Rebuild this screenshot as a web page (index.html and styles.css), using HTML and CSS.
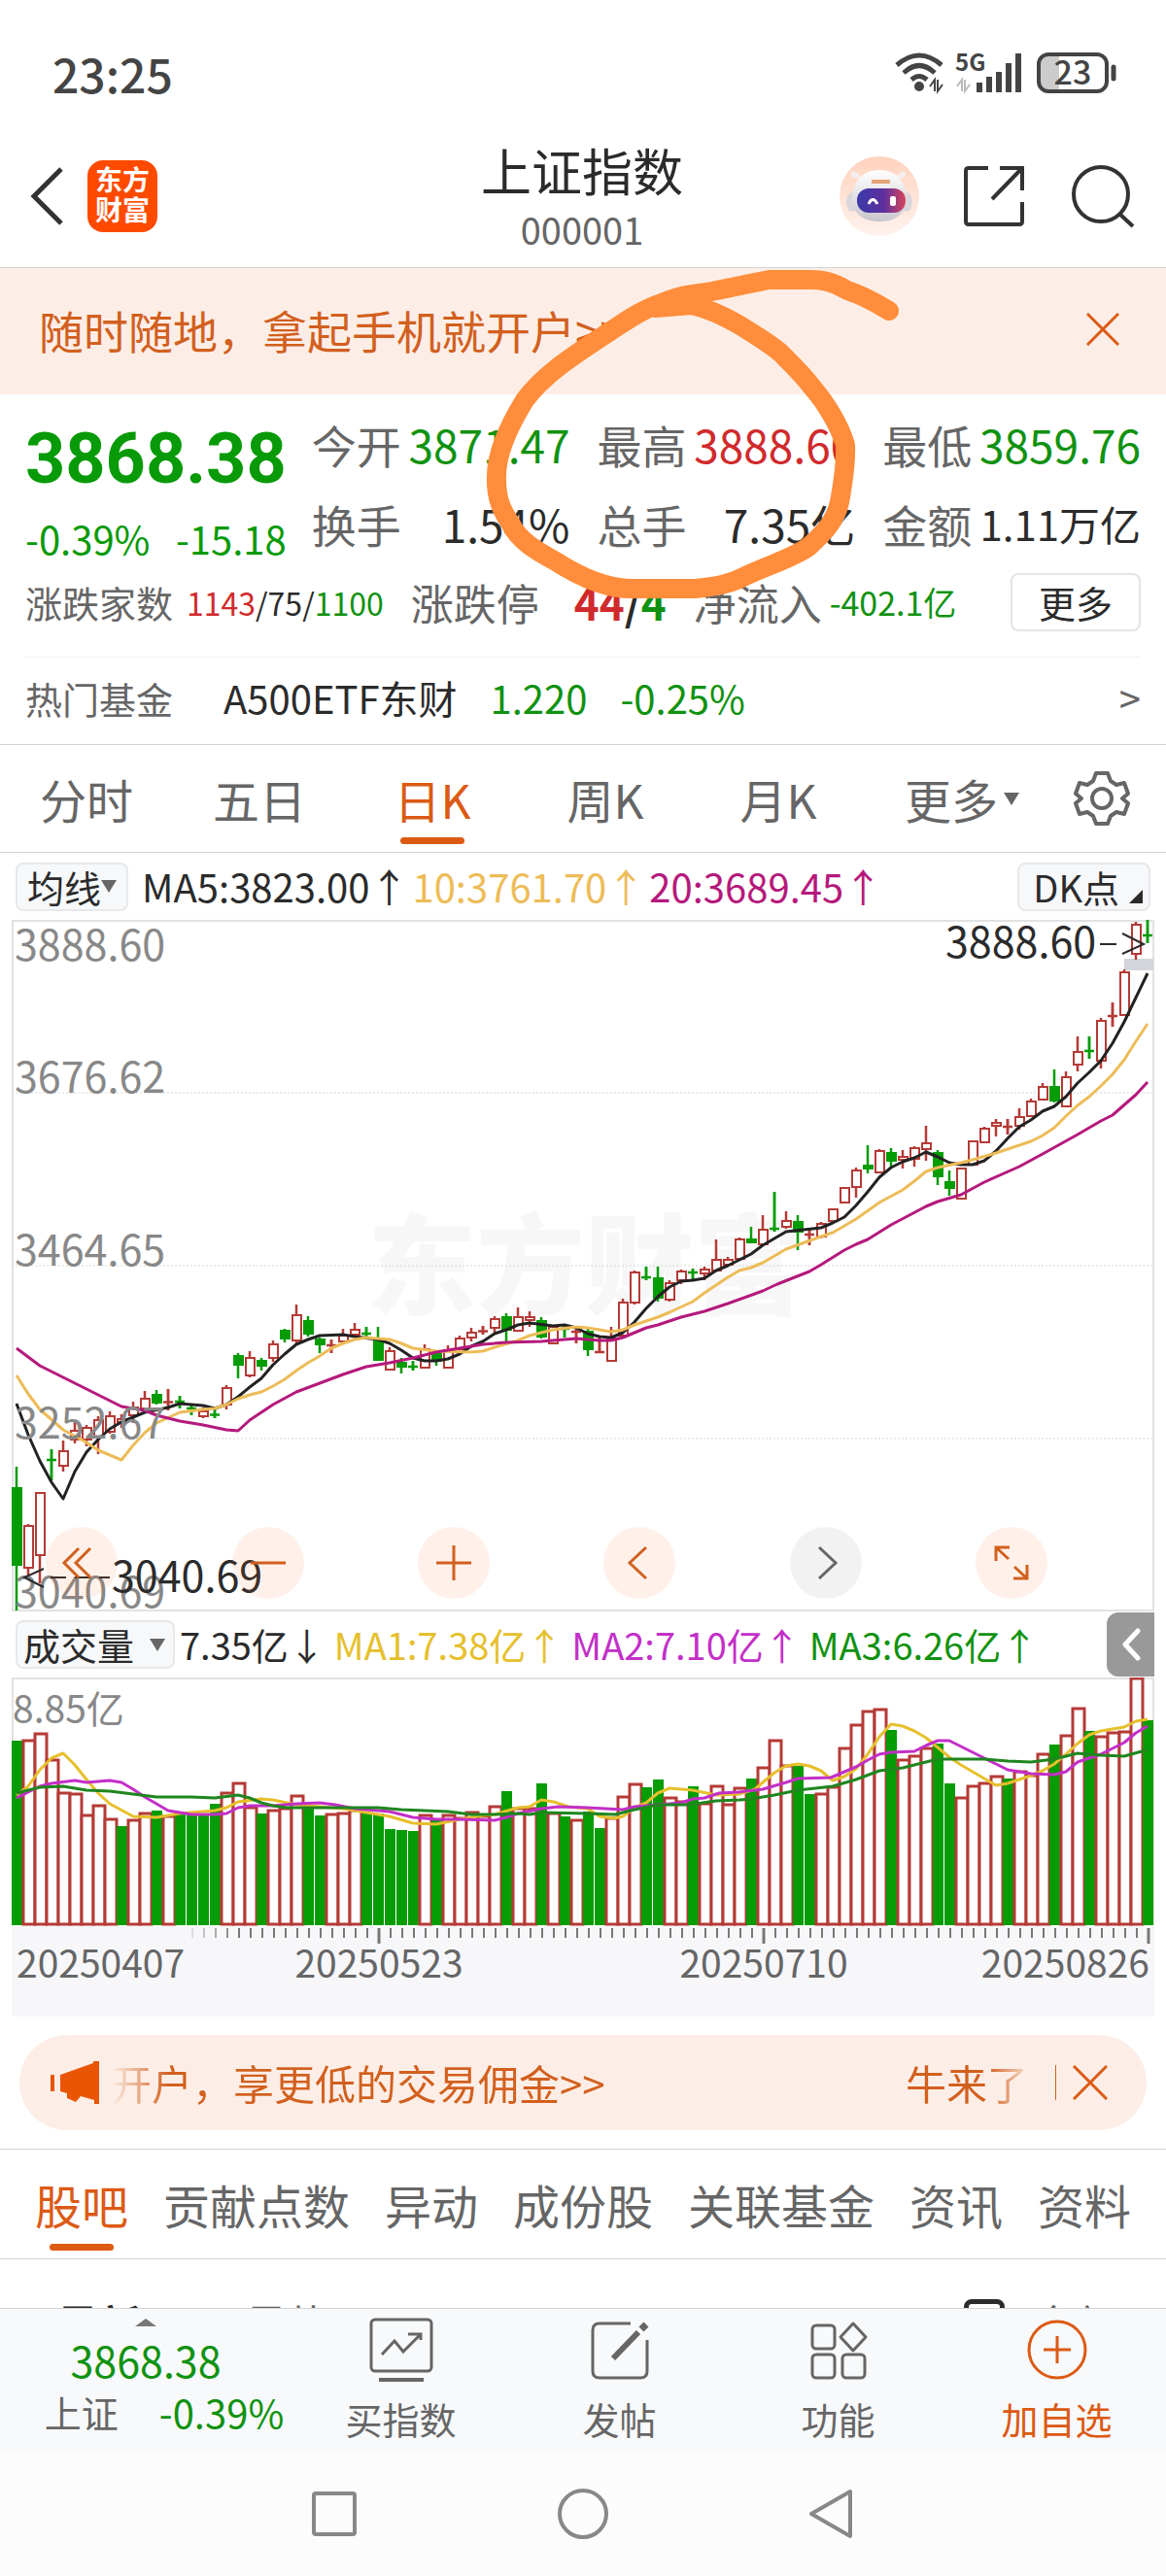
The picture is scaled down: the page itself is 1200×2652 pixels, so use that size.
FILE: index.html
```html
<!DOCTYPE html>
<html lang="zh-CN">
<head>
  <meta charset="UTF-8" />
  <meta name="viewport" content="width=device-width, initial-scale=1" />
  <title>上证指数 000001</title>
  <link rel="stylesheet" href="styles.css">
</head>
<body>
  <div class="app">

    <div class="status-bar">
      <span class="clock">23:25</span>
      <svg class="status-icons" viewBox="0 0 230 44" role="img" aria-label="Wi-Fi, 5G, 23%">
        <g fill="none" stroke="#444" stroke-width="5">
          <path d="M3 14 Q26 -6 49 14" />
          <path d="M10 22 Q26 7 42 22" />
          <path d="M18 29 Q26 22 34 29" />
        </g>
        <circle cx="26" cy="36" r="5" fill="#444" />
        <path d="M37 36 L42 29 V41 M45 29 V41 L50 34" fill="none" stroke="#444" stroke-width="2" />
        <text class="net" x="63" y="20">5G</text>
        <path d="M65 36 L70 29 V41 M73 29 V41 L78 34" fill="none" stroke="#bbb" stroke-width="2" />
        <path d="M88 42 V32 M98 42 V26 M108 42 V21 M118 42 V12 M128 42 V2" stroke="#444" stroke-width="6" />
        <path d="M156 3 h14 v38 h-14 q-7 0 -7 -8 v-22 q0 -8 7 -8z" fill="#ccc" />
        <rect x="149" y="3" width="70" height="38" rx="10" fill="none" stroke="#444" stroke-width="4" />
        <path d="M226 16 V28" stroke="#444" stroke-width="5" stroke-linecap="round" />
        <text class="battery" x="184" y="34" text-anchor="middle">23</text>
      </svg>
    </div>

    <header class="header">
      <div class="header-left">
        <button class="icon-btn" aria-label="返回">
          <svg width="37" height="60" viewBox="0 0 37 60" fill="none" stroke="#333" stroke-width="5"><path d="M33 2 L5 30 L33 58" /></svg>
        </button>
        <a class="logo" href="#"><span>东方</span><span>财富</span></a>
      </div>
      <div class="title">
        <h1>上证指数</h1>
        <p>000001</p>
      </div>
      <div class="header-right">
        <button class="icon-btn" aria-label="智能助手">
          <svg width="82" height="82" viewBox="0 0 82 82">
            <defs>
              <linearGradient id="halo" x1="0" y1="0" x2="0" y2="1"><stop offset="0" stop-color="#ffd2bd" /><stop offset="1" stop-color="#fff3ee" /></linearGradient>
              <linearGradient id="visor" x1="0" y1="0" x2="1" y2="0"><stop offset="0" stop-color="#3a3aa8" /><stop offset=".55" stop-color="#5d2fa0" /><stop offset="1" stop-color="#d8455c" /></linearGradient>
              <linearGradient id="shell" x1="0" y1="0" x2="0" y2="1"><stop offset="0" stop-color="#fff" /><stop offset="1" stop-color="#c9c6cd" /></linearGradient>
            </defs>
            <circle cx="41" cy="41" r="41" fill="url(#halo)" />
            <path d="M14 22 q-4 -3 -1 -7 q8 2 9 8z M66 22 q4 -3 1 -7 q-8 2 -9 8z" fill="#f4eeee" />
            <ellipse cx="13" cy="47" rx="6" ry="10" fill="#d9d6dc" />
            <ellipse cx="69" cy="47" rx="6" ry="10" fill="#d9d6dc" />
            <path d="M41 14 C60 14 69 28 69 44 C69 60 56 67 41 67 C26 67 13 60 13 44 C13 28 22 14 41 14z" fill="url(#shell)" />
            <rect x="33" y="24" width="19" height="4" rx="1" fill="#e5a473" />
            <rect x="18" y="33" width="50" height="25" rx="12" fill="url(#visor)" />
            <path d="M30 49 q4 -9 9 0" fill="none" stroke="#fff" stroke-width="3" />
            <rect x="52" y="41" width="6" height="10" rx="2" fill="#fff" />
          </svg>
        </button>
        <button class="icon-btn" aria-label="分享">
          <svg width="66" height="66" viewBox="0 0 66 66" fill="none" stroke="#333" stroke-width="4"><path d="M26 4 H6 Q3 4 3 7 V59 Q3 62 6 62 H58 Q61 62 61 59 V39 M38 4 H61 V27 M61 4 L30 36" /></svg>
        </button>
        <button class="icon-btn" aria-label="搜索">
          <svg width="66" height="66" viewBox="0 0 66 66" fill="none" stroke="#333" stroke-width="4"><circle cx="31" cy="31" r="28" /><path d="M50 51 L64 64" /></svg>
        </button>
      </div>
    </header>

    <div class="banner">
      <a href="#">随时随地，拿起手机就开户&gt;&gt;</a>
      <button class="icon-btn" aria-label="关闭">
        <svg width="34" height="34" viewBox="0 0 34 34" stroke="#dc5a14" stroke-width="3"><path d="M1 1 L33 33 M33 1 L1 33" /></svg>
      </button>
    </div>

    <section class="quote">
      <div class="quote-main">
        <div class="price">
          <strong>3868.38</strong>
          <p><span>-0.39%</span><span>-15.18</span></p>
        </div>
        <dl class="stats">
          <div><dt>今开</dt><dd class="down">3871.47</dd></div>
          <div><dt>最高</dt><dd class="up">3888.60</dd></div>
          <div><dt>最低</dt><dd class="down">3859.76</dd></div>
          <div><dt>换手</dt><dd>1.54%</dd></div>
          <div><dt>总手</dt><dd>7.35亿</dd></div>
          <div><dt>金额</dt><dd class="long">1.11万亿</dd></div>
        </dl>
      </div>
      <div class="breadth">
        <p class="counts"><span class="label">涨跌家数</span><span><b class="up">1143</b>/75/<b class="down">1100</b></span></p>
        <p class="limits"><span class="label">涨跌停</span><strong><b class="up">44</b>/<b class="down">4</b></strong></p>
        <p class="flow"><span class="label">净流入</span><span class="down">-402.1亿</span></p>
        <button class="more">更多</button>
      </div>
      <a class="fund" href="#">
        <span class="label">热门基金</span>
        <span class="fund-name">A500ETF东财</span>
        <span class="down">1.220</span>
        <span class="down">-0.25%</span>
        <span class="arrow">&gt;</span>
      </a>
    </section>

    <nav class="periods">
      <button>分时</button>
      <button>五日</button>
      <button class="active">日K</button>
      <button>周K</button>
      <button>月K</button>
      <button class="drop">更多<i class="caret"></i></button>
      <button class="gear" aria-label="设置">
        <svg width="58" height="58" viewBox="0 0 58 58" fill="none" stroke="#666" stroke-width="4" stroke-linejoin="round">
          <path d="M23 3 H35 L38 11 L44 15 L52 13 L56 24 L50 29 L56 34 L52 45 L44 43 L38 47 L35 55 H23 L20 47 L14 43 L6 45 L2 34 L8 29 L2 24 L6 13 L14 15 L20 11z" />
          <circle cx="29" cy="29" r="10" />
        </svg>
      </button>
    </nav>

    <div class="indicators averages">
      <button class="chip">均线<i class="caret"></i></button>
      <span>MA5:3823.00↑</span>
      <span class="ma10">10:3761.70↑</span>
      <span class="ma20">20:3689.45↑</span>
      <button class="chip dk">DK点<i class="corner"></i></button>
    </div>

    <div class="kline">
      <svg id="kline" class="chart" viewBox="12 0 1176 712"></svg>
      <div class="tools">
        <button aria-label="最早"><svg viewBox="0 0 74 74"><path d="M34 22 L19 37 L34 52 M46 22 L31 37 L46 52" /></svg></button>
        <button aria-label="缩小"><svg viewBox="0 0 74 74"><path d="M19 37 H55" /></svg></button>
        <button aria-label="放大"><svg viewBox="0 0 74 74"><path d="M19 37 H55 M37 19 V55" /></svg></button>
        <button aria-label="左移"><svg viewBox="0 0 74 74"><path d="M44 21 L27 37 L44 53" /></svg></button>
        <button class="off" aria-label="右移"><svg viewBox="0 0 74 74"><path d="M30 21 L47 37 L30 53" /></svg></button>
        <button aria-label="全屏"><svg viewBox="0 0 74 74"><path d="M21 35 V21 H35 M21 21 L34 33 M53 39 V53 H39 M53 53 L40 41" /></svg></button>
      </div>
    </div>

    <div class="indicators volume-head">
      <button class="chip wide">成交量<i class="caret"></i></button>
      <span>7.35亿↓</span>
      <span class="v1">MA1:7.38亿↑</span>
      <span class="v2">MA2:7.10亿↑</span>
      <span class="v3">MA3:6.26亿↑</span>
      <button class="fold" aria-label="展开">
        <svg width="20" height="36" viewBox="0 0 20 36" fill="none" stroke="#fff" stroke-width="5" stroke-linecap="round" stroke-linejoin="round"><path d="M16 4 L3 18 L16 32" /></svg>
      </button>
    </div>

    <div class="volume">
      <svg id="volume" class="chart" viewBox="12 0 1176 349"></svg>
    </div>

    <div class="promo">
      <svg width="50" height="44" viewBox="0 0 50 44" fill="#e95504"><path d="M0 14 H4 V31 H0z M10 14 L44 2 V0 H50 V44 H45 V40 L31 36 L26 42 L17 38 V33 L10 31z" /></svg>
      <a class="promo-text" href="#">开户，享更低的交易佣金&gt;&gt;</a>
      <a class="promo-next" href="#">牛来了！</a>
      <button class="icon-btn" aria-label="关闭广告">
        <svg width="36" height="36" viewBox="0 0 36 36" stroke="#dc5a14" stroke-width="3"><path d="M1 1 L35 35 M35 1 L1 35" /></svg>
      </button>
    </div>

    <nav class="sections">
      <button class="active">股吧</button>
      <button>贡献点数</button>
      <button>异动</button>
      <button>成份股</button>
      <button>关联基金</button>
      <button>资讯</button>
      <button>资料</button>
    </nav>

    <div class="feed-head">
      <button class="on">最新</button>
      <button>最热</button>
      <button class="filter"><i class="box"></i>全部</button>
    </div>

    <footer class="toolbar">
      <a class="mini" href="#">
        <i class="peak"></i>
        <strong>3868.38</strong>
        <span><em>上证</em>-0.39%</span>
      </a>
      <button class="tool">
        <svg width="66" height="66" viewBox="0 0 66 66" fill="none" stroke="#666" stroke-width="3"><rect x="2" y="2" width="62" height="53" rx="4" /><path d="M10 64 H56" stroke-width="4" /><path d="M13 38 L26 24 L35 35 L52 18 M40 17 H53 V23" /></svg>
        买指数
      </button>
      <button class="tool">
        <svg width="66" height="66" viewBox="0 0 66 66" fill="none" stroke="#666" stroke-width="3"><path d="M44 6 H12 Q5 6 5 13 V55 Q5 62 12 62 H54 Q61 62 61 55 V23" /><path d="M26 42 L52 15" stroke-width="6" /><path d="M55 12 L60 7" stroke-width="7" /></svg>
        发帖
      </button>
      <button class="tool">
        <svg width="66" height="66" viewBox="0 0 66 66" fill="none" stroke="#666" stroke-width="3"><rect x="6" y="8" width="23" height="24" rx="4" /><rect x="6" y="38" width="23" height="24" rx="4" /><rect x="37" y="38" width="23" height="24" rx="4" /><path d="M48 6 L61 20 L48 34 L35 20z" stroke-linejoin="round" /></svg>
        功能
      </button>
      <button class="tool add">
        <svg width="66" height="66" viewBox="0 0 66 66" fill="none" stroke="#dc5a14" stroke-width="3"><circle cx="33" cy="33" r="29" /><path d="M19 33 H47 M33 19 V47" /></svg>
        加自选
      </button>
    </footer>

    <div class="sysnav">
      <button aria-label="最近任务"><svg width="54" height="54" viewBox="0 0 54 54"><rect x="6" y="6" width="42" height="42" rx="2" /></svg></button>
      <button aria-label="主屏幕"><svg width="54" height="54" viewBox="0 0 54 54"><circle cx="27" cy="27" r="24" /></svg></button>
      <button aria-label="后退"><svg width="54" height="54" viewBox="0 0 54 54"><path d="M46 4 V50 L6 27z" stroke-linejoin="round" /></svg></button>
    </div>

    <!-- hand-drawn marker round the day's high -->
    <svg class="marker" viewBox="0 0 1200 700">
      <path d="M915 320 C902 312 888 304 872 299 C855 289 845 288 834 288 L792 288 C770 292 750 297 727 301 C700 304 690 308 681 312 C662 318 645 330 628 341 C590 366 560 385 540 412 C524 438 511 465 511 490 C510 515 518 528 526 540 C534 556 550 566 572 578 C600 596 625 606 650 606 L715 606 C735 604 750 602 765 594 C790 582 815 575 832 563 C850 547 860 535 864 517 C868 495 871 475 870 458 C864 438 850 415 837 400 C826 385 812 372 803 363 C790 352 780 347 765 337 C745 325 730 318 712 314 L674 317" />
    </svg>
  </div>

  <script src="chart.js"></script>
</body>
</html>
```
FILE: styles.css
```css
/* Reset & base */
* {
  box-sizing: border-box;
  margin: 0;
  padding: 0;
}
body {
  background: #fff;
  color: #2b2b2b;
  font-family: "Noto Sans CJK SC", sans-serif;
  font-size: 38px;
}
button {
  background: none;
  border: none;
  color: inherit;
  font: inherit;
  cursor: pointer;
}
a {
  color: inherit;
  text-decoration: none;
}
b, em {
  font-weight: inherit;
  font-style: normal;
}
svg {
  display: block;
}
.app {
  position: relative;
  overflow: hidden;
}
.up { color: #d02a2c; }
.down { color: #109210; }
.label { color: #666; }

.icon-btn {
  display: flex;
  align-items: center;
}
.caret {
  display: inline-block;
  border: 8px solid transparent;
  border-top: 13px solid #666;
  border-bottom: 0;
}

/* Status bar */
.status-bar {
  display: flex;
  justify-content: space-between;
  align-items: center;
  padding: 45px 50px 36px 54px;
  line-height: 60px;
}
.clock {
  font-size: 48px;
  font-weight: 500;
  color: #444;
}
.status-icons {
  width: 230px;
  overflow: visible;
}
.status-icons text {
  fill: #444;
  font-weight: 700;
}
.net { font-size: 24px; }
.status-icons .battery {
  font-size: 34px;
  font-weight: 500;
}

/* Header */
.header {
  display: grid;
  grid-template-columns: 1fr auto 1fr;
  align-items: center;
  padding: 0 32px 12px 30px;
  border-bottom: 1px solid #d4d4d4;
}
.header-left,
.header-right {
  display: flex;
  align-items: center;
}
.header-left {
  gap: 23px;
}
.header-right {
  justify-content: flex-end;
  gap: 45px;
}
.logo {
  display: flex;
  flex-direction: column;
  align-items: center;
  justify-content: center;
  padding: 4px 8px 8px;
  border-radius: 16px;
  background: #fe4a00;
  color: #fff;
  font-size: 28px;
  font-weight: 700;
  line-height: 31px;
}
.title {
  text-align: center;
}
.title h1 {
  font-size: 52px;
  font-weight: 400;
  line-height: 68px;
}
.title p {
  color: #666;
  line-height: 54px;
}

/* Banner */
.banner {
  display: flex;
  justify-content: space-between;
  align-items: center;
  padding: 0 48px 4px 40px;
  background: #fceee6;
  color: #d2601e;
  font-size: 46px;
  line-height: 126px;
}

/* Quote */
.quote {
  padding: 10px 26px 0;
  border-bottom: 1px solid #d4d4d4;
}
.quote-main {
  display: grid;
  grid-template-columns: 268fr 852fr;
  gap: 26px;
}
.price {
  color: #089a08;
}
.price strong {
  display: block;
  font-family: Roboto, sans-serif;
  font-size: 72px;
  font-weight: 700;
  line-height: 114px;
}
.price p {
  display: flex;
  justify-content: space-between;
  font-size: 40px;
  line-height: 48px;
}
.stats {
  display: grid;
  grid-template-columns: repeat(3, 1fr);
  column-gap: 28px;
  font-size: 46px;
  line-height: 82px;
}
.stats div {
  display: flex;
  justify-content: space-between;
  white-space: nowrap;
}
.stats dt {
  color: #666;
}
.stats .long {
  font-size: 42px;
}
.breadth {
  display: flex;
  align-items: center;
  gap: 28px;
  padding: 10px 0 26px;
  border-bottom: 1px solid #f0f0f0;
  line-height: 60px;
}
.breadth p {
  display: flex;
  white-space: nowrap;
}
.counts { gap: 14px; }
.counts span + span {
  font-size: 32px;
}
.flow span + span {
  font-size: 34px;
}
.limits { gap: 36px; }
.limits,
.flow .label {
  font-size: 44px;
}
.flow { gap: 8px; }
.more {
  margin-left: auto;
  padding: 0 27px;
  border: 2px solid #e4e4e4;
  border-radius: 8px;
  line-height: 56px;
}
.fund {
  display: flex;
  gap: 34px;
  padding-bottom: 6px;
  font-size: 40px;
  line-height: 83px;
}
.fund .label {
  font-size: 38px;
}
.fund-name {
  margin-left: 18px;
}
.arrow {
  margin-left: auto;
  color: #666;
}

/* Period tabs */
.periods,
.sections {
  border-bottom: 1px solid #d4d4d4;
  color: #666;
  font-size: 48px;
  line-height: 110px;
}
.periods {
  display: grid;
  grid-template-columns: repeat(6, 178fr) 132fr;
}
.periods button,
.sections button {
  position: relative;
}
.periods .active,
.sections .active {
  color: #dc5a14;
}
.active::after {
  content: "";
  position: absolute;
  left: 50%;
  bottom: 8px;
  width: 66px;
  height: 7px;
  margin-left: -33px;
  border-radius: 4px;
  background: #dc5a14;
}
.drop,
.gear {
  display: flex;
  align-items: center;
  justify-content: center;
}
.drop {
  gap: 6px;
  padding-left: 22px;
}

/* Indicator rows */
.indicators {
  display: flex;
  align-items: center;
  padding: 0 16px;
  white-space: nowrap;
}
.averages {
  gap: 4px;
  font-size: 40px;
  line-height: 69px;
}
.ma10 { color: #edbc58; }
.ma20 { color: #b5197c; }
.chip {
  display: flex;
  align-items: center;
  padding: 0 10px;
  border: 2px solid #e6e8ea;
  border-radius: 8px;
  background: #f6f8fa;
  font-size: 38px;
  line-height: 46px;
}
.averages .chip {
  margin-right: 10px;
}
.averages .dk {
  position: relative;
  margin-left: auto;
  margin-right: 0;
  padding: 0 30px 0 14px;
}
.corner {
  position: absolute;
  right: 6px;
  bottom: 6px;
  border: 7px solid #2b2b2b;
  border-top-color: transparent;
  border-left-color: transparent;
}
.chip.wide {
  gap: 16px;
  padding: 0 8px 0 6px;
}
.volume-head {
  gap: 9px;
  padding-right: 12px;
  line-height: 68px;
}
.volume-head .chip {
  margin-right: -4px;
}
.v1 { color: #e6c02c; }
.v2 { color: #c32fc8; }
.v3 { color: #109210; }
.fold {
  display: flex;
  align-items: center;
  margin-left: auto;
  padding: 15px 13px 15px 16px;
  border-radius: 12px 0 0 12px;
  background: #999;
}

/* Charts */
.kline,
.volume {
  position: relative;
  margin: 0 12px;
}
.chart {
  width: 100%;
}
.chart text {
  font-size: 43px;
  fill: #888;
}
.chart .note { fill: #2b2b2b; }
.chart .watermark {
  font-size: 112px;
  font-weight: 900;
  fill: #f7f7f7;
}
.chart .vol-label,
.chart .date {
  font-size: 39px;
}
.chart .date { fill: #666; }
.frame {
  fill: none;
  stroke: #e2e2e2;
  stroke-width: 2;
}
.grid {
  stroke: #d8d8d8;
  stroke-dasharray: 2 2;
}
.tools {
  position: absolute;
  left: 3%;
  right: 9%;
  bottom: 13px;
  display: flex;
  justify-content: space-between;
  padding-right: 4px;
}
.tools button {
  width: 74px;
  border-radius: 50%;
  background: rgba(255, 100, 20, 0.09);
}
.tools .off {
  background: rgba(0, 0, 0, 0.05);
}
.tools path {
  fill: none;
  stroke: #d2601e;
  stroke-width: 3;
}
.tools .off path {
  stroke: #666;
}

/* Promo */
.promo {
  display: flex;
  align-items: center;
  margin: 19px 20px;
  padding: 0 40px 0 32px;
  border-radius: 49px;
  background: #fceee6;
  color: #d2601e;
  font-size: 42px;
  line-height: 98px;
}
.promo-text {
  margin-left: 12px;
  background: linear-gradient(90deg, rgba(210, 96, 30, 0) 0, #d2601e 60px);
  background-clip: text;
  -webkit-background-clip: text;
  color: transparent;
}
.promo-next {
  width: 146px;
  margin-left: auto;
  overflow: hidden;
  white-space: nowrap;
  background: linear-gradient(90deg, #d2601e 84px, rgba(210, 96, 30, 0) 132px);
  background-clip: text;
  -webkit-background-clip: text;
  color: transparent;
}
.promo .icon-btn {
  margin-left: 8px;
  padding-left: 17px;
  border-left: 1px solid #d2601e;
}

/* Section tabs */
.sections {
  display: flex;
  justify-content: space-between;
  padding: 0 36px;
  border-top: 1px solid #d4d4d4;
  line-height: 112px;
}

/* Feed header, cut by the toolbar */
.feed-head {
  display: flex;
  gap: 106px;
  height: 50px;
  padding: 34px 50px 0 58px;
  overflow: hidden;
  color: #666;
  font-size: 44px;
  line-height: 64px;
}
.feed-head .on {
  color: #2b2b2b;
  font-weight: 700;
}
.filter {
  display: flex;
  gap: 28px;
  margin-left: auto;
}
.box {
  width: 42px;
  height: 40px;
  margin-top: 7px;
  border: 5px solid #2b2b2b;
  border-radius: 8px;
}

/* Toolbar */
.toolbar {
  display: grid;
  grid-template-columns: 300fr 225fr 225fr 225fr 225fr;
  border-top: 1px solid #d4d4d4;
  background: #f7f9fb;
  color: #666;
  line-height: 56px;
}
.mini {
  display: flex;
  flex-direction: column;
  align-items: center;
  padding: 10px 0 0 38px;
  color: #109210;
}
.mini strong {
  font-size: 43px;
  font-weight: 400;
  line-height: 68px;
  margin-right: 38px;
}
.mini span {
  display: flex;
  font-size: 40px;
  line-height: 40px;
}
.mini em {
  margin-right: 42px;
  color: #666;
  font-size: 38px;
}
.peak {
  border: 11px solid transparent;
  border-bottom: 8px solid #777;
  border-top: 0;
  margin-right: 38px;
}
.tool {
  display: flex;
  flex-direction: column;
  align-items: center;
  gap: 10px;
  padding: 9px 0 6px;
}
.tool.add {
  color: #dc5a14;
}

/* System navigation */
.sysnav {
  display: flex;
  justify-content: center;
  gap: 202px;
  padding: 37px 0;
  background: #fcfcfc;
}
.sysnav svg {
  fill: none;
  stroke: #888;
  stroke-width: 4;
}

.marker {
  position: absolute;
  top: 0;
  left: 0;
  width: 100%;
  pointer-events: none;
}
.marker path {
  fill: none;
  stroke: #ff8d3b;
  stroke-width: 20;
  stroke-linecap: round;
  stroke-linejoin: round;
}
```
FILE: chart.js
```js
const RED = '#b53a36';
const GREEN = '#069c06';
const STEP = 12;
const LEFT = 17;

// colour, high, body top, body bottom, low
const candles = `
G 563 584 664 711|R 622 623 667 676|R 589 589 654 683|G 545 555 557 577|R 536 546 562 568|R 517 525 535 539|R 520 522 535 542|R 511 514 532 550
R 506 510 527 529|R 509 513 517 523|R 496 501 510 518|R 485 492 503 505|G 484 488 497 499|R 483 495 498 505|G 490 495 497 503|G 498 502 504 510
R 502 505 511 513|G 502 508 511 513|R 479 481 499 504|G 446 448 458 472|R 444 450 469 471|G 451 453 459 464|R 433 436 451 455|G 421 422 431 435
R 396 406 433 437|G 408 412 426 429|G 430 431 437 446|R 432 437 439 446|R 421 427 434 436|R 415 421 427 429|G 419 425 427 429|G 419 433 453 453
R 440 443 463 463|G 451 455 460 467|G 454 459 461 464|R 437 441 461 462|G 445 446 454 459|R 438 442 461 461|R 428 430 442 443|R 420 424 430 434
R 418 423 424 427|R 408 410 420 426|G 405 408 422 438|R 399 408 423 423|R 403 408 412 419|G 409 412 429 431|R 418 418 436 436|G 418 420 422 430
R 419 423 425 436|G 421 423 442 449|R 430 444 446 446|R 419 430 454 454|R 390 393 428 430|R 361 362 394 396|G 357 367 369 371|G 357 368 389 393
R 371 373 391 393|R 360 361 371 375|G 359 362 364 370|R 357 359 364 371|R 329 349 361 362|R 347 349 355 356|R 327 328 349 350|G 316 328 332 333
R 304 318 334 336|G 280 317 319 321|R 300 309 316 318|G 304 310 321 340|R 318 323 325 335|R 311 312 326 328|R 297 297 310 311|R 275 275 291 291
R 255 257 275 286|G 232 252 256 261|R 236 237 260 261|G 235 239 248 254|R 237 243 247 256|R 233 234 246 254|R 212 229 236 248|G 237 239 264 273
G 258 269 276 284|R 255 255 287 287|R 227 227 252 252|R 213 214 229 230|R 205 208 212 223|R 205 212 214 221|R 194 202 212 216|R 184 186 202 203
R 168 171 185 186|G 154 171 186 188|R 156 161 192 192|R 120 135 149 156|G 120 134 136 143|R 101 103 145 153|R 85 98 100 110|R 51 53 98 98
R 2 4 35 41|G 0 15 17 24`.trim().split(/[|\n]/).map(row => {
  const [color, ...values] = row.split(' ');
  return [color, ...values.map(Number)];
});

const ma5 = '17,498 29,530 41,557 53,579 65,596 77,568 89,548 101,535 113,524 125,517 149,507 173,502 185,498 209,500 221,503 233,499 245,491 257,481 269,472 281,458 293,447 305,437 317,432 329,428 353,427 365,429 389,432 401,436 413,443 425,451 437,454 449,454 461,452 473,447 485,439 497,434 509,426 521,422 533,417 545,415 569,418 581,417 593,420 605,426 617,429 629,430 641,425 653,414 665,400 677,388 689,378 701,372 713,371 725,369 737,361 749,356 761,350 773,344 785,335 797,328 809,321 845,317 857,312 869,306 881,294 893,280 905,265 917,255 929,249 941,245 953,239 965,244 977,250 989,252 1001,252 1013,248 1025,238 1037,225 1049,213 1061,206 1073,197 1085,192 1097,182 1109,168 1121,157 1133,145 1145,127 1157,105 1169,80 1181,55';
const ma10 = '17,469 29,488 41,504 65,525 89,538 101,546 125,556 137,541 149,528 161,518 185,507 209,504 221,503 233,499 245,493 257,489 269,486 281,480 293,473 305,464 317,456 329,449 341,441 353,436 365,432 377,430 401,432 413,436 425,441 449,444 485,445 497,444 509,440 533,433 545,428 557,425 569,422 593,419 605,420 617,422 629,424 641,422 653,417 677,409 689,404 713,393 725,384 737,376 749,368 761,361 773,358 785,353 797,346 809,339 845,326 857,322 881,308 905,291 929,278 941,269 953,259 965,255 989,250 1001,247 1025,240 1049,232 1061,228 1073,222 1085,214 1097,202 1109,191 1121,182 1133,171 1145,159 1157,144 1169,125 1181,107';
const ma20 = '17,441 41,459 65,471 89,483 125,501 149,505 161,510 185,516 209,520 233,525 245,526 257,515 281,499 305,486 329,477 353,468 377,460 401,456 425,451 449,445 473,441 497,437 521,435 557,434 593,431 617,433 629,433 641,430 665,420 677,417 701,409 725,403 749,395 785,382 800,375 833,362 845,355 869,340 881,334 893,329 917,314 953,295 965,290 989,283 1013,270 1049,254 1073,241 1109,221 1133,207 1145,201 1169,180 1181,167';

// colour + top of each bar
const volumes = ('G65 R64 R57 R84 R118 R119 R141 R131 R145 G153 R146 R139 G137 R142 G138 G140 G142 G130 R118 R108 R133 G140 R136 R134 R121 ' +
  'G134 G142 R140 R139 R136 G140 G140 G156 G157 G158 R141 G145 R141 R144 R138 R142 R132 G117 R134 R134 G109 R139 G143 R146 ' +
  'G138 G155 R144 R122 R109 G113 G105 R123 R127 G112 R129 R111 R130 R113 G104 R92 R64 R90 G91 G120 R119 R112 R72 R48 R34 R32 ' +
  'G54 R84 R80 R72 G68 G109 R123 R111 R108 R101 G104 R96 R100 R78 G69 R59 R31 G55 R60 R56 R55 R0 G44').split(' ');

const vol1 = '17,121 29,112 41,95 53,83 65,78 77,90 89,105 101,119 113,130 137,143 161,144 185,140 209,138 221,137 233,134 245,128 269,125 281,126 305,131 329,133 353,135 377,139 401,143 425,150 449,151 473,146 497,142 509,141 533,134 545,133 557,126 570,128 585,133 605,135 617,143 632,145 641,143 653,134 665,129 677,119 689,114 713,116 737,121 761,120 777,115 785,108 797,98 809,91 821,89 833,91 845,96 857,106 869,102 881,94 893,79 905,61 917,48 929,50 941,55 953,62 965,72 977,82 989,90 1001,97 1013,104 1025,111 1037,109 1049,105 1061,101 1073,96 1085,89 1097,79 1109,68 1121,59 1133,55 1145,53 1157,51 1169,45 1181,43';
const vol2 = '17,124 29,118 41,112 53,109 77,106 89,108 113,106 125,108 137,115 149,123 161,130 173,137 197,141 221,141 233,140 245,134 257,132 281,132 305,130 329,129 345,131 365,135 401,138 425,144 449,146 473,146 509,147 521,144 533,140 557,135 575,133 605,134 641,136 653,133 677,131 701,129 713,125 725,124 740,119 760,118 785,115 809,108 821,104 855,103 881,92 893,85 905,79 917,77 941,76 953,70 965,65 977,65 989,71 1013,83 1025,89 1037,95 1061,99 1085,100 1097,97 1109,87 1133,79 1157,67 1169,57 1181,50';
const vol3 = '17,119 41,113 65,112 89,116 113,117 137,120 161,123 197,123 221,124 245,121 257,124 269,129 281,132 295,134 365,134 389,134 413,136 461,138 485,141 509,141 533,140 545,141 557,139 605,140 633,141 653,136 677,131 709,131 737,127 761,126 773,125 797,121 821,116 857,112 881,105 905,96 929,93 953,87 965,84 1013,84 1037,86 1061,87 1085,84 1109,78 1133,80 1157,81 1175,76 1181,75';

function line(points, color) {
  return `<polyline points="${points}" fill="none" stroke="${color}" stroke-width="3" stroke-linejoin="round"/>`;
}

function rect(x, y, w, h, fill, stroke, width) {
  return `<rect x="${x}" y="${y}" width="${w}" height="${h}" fill="${fill}" stroke="${stroke}" stroke-width="${width}"/>`;
}

function drawKline() {
  let out = '<text class="watermark" x="378" y="398">东方财富</text>';
  out += '<rect class="frame" x="13" y="1" width="1174" height="710"/>';
  [178, 356, 534].forEach(y => {
    out += `<line class="grid" x1="12" x2="1187" y1="${y}" y2="${y}"/>`;
  });
  out += '<rect x="1157" y="40" width="30" height="12" fill="#d2d5d9"/>';

  candles.forEach(([type, high, top, bottom, low], i) => {
    const x = LEFT + i * STEP;
    const color = type === 'R' ? RED : GREEN;
    out += `<path d="M${x} ${high}V${top}M${x} ${bottom}V${low}" stroke="${color}" stroke-width="2.5"/>`;
    if (bottom - top < 4) {
      out += `<path d="M${x} ${high}V${low}M${x - 5} ${(top + bottom) / 2}h10" stroke="${color}" stroke-width="2.5"/>`;
    } else {
      out += rect(x - 4, top + 1, 9, bottom - top - 1, type === 'R' ? '#fff' : GREEN, color, 2);
    }
  });

  out += line(ma5, '#222') + line(ma10, '#edbc58') + line(ma20, '#b5197c');

  [['3888.60', 42], ['3676.62', 178], ['3464.65', 356], ['3252.67', 534], ['3040.69', 708]].forEach(([t, y]) => {
    out += `<text x="15" y="${y}">${t}</text>`;
  });
  out += '<text class="note" x="115" y="692">3040.69</text>';
  out += '<text class="note" x="973" y="39">3888.60</text>';
  out += '<path d="M45 668L25 677L45 687M52 677h16M77 677h16M102 677h11M1132 25h17M1155 14L1177 25L1155 35" fill="none" stroke="#2b2b2b" stroke-width="2"/>';
  document.getElementById('kline').innerHTML = out;
}

function drawVolume() {
  const base = 255;
  let out = '<path class="frame" d="M13 255V1H1187V255"/>';
  out += '<rect x="12" y="256" width="1176" height="93" fill="#f7f7fa"/>';

  volumes.forEach((v, i) => {
    const x = LEFT + i * STEP;
    const top = Number(v.slice(1));
    if (v[0] === 'R') {
      out += rect(x - 5, top + 1, 12, base - top - 2, '#fff', RED, 3);
    } else {
      out += `<rect x="${x - 5}" y="${top}" width="11" height="${base - top}" fill="${GREEN}"/>`;
    }
  });

  out += line(vol1, '#e6c02c') + line(vol2, '#c32fc8') + line(vol3, '#1f861f');
  out += '<text class="vol-label" x="13" y="47">8.85亿</text>';

  for (let x = 198, k = 0; x <= 1182; x += STEP, k++) {
    const major = k % 33 === 16;
    const opacity = Math.min(1, (k + 1) / 5);
    out += `<line x1="${x}" x2="${x}" y1="258" y2="${major ? 274 : 268}" stroke="#777" stroke-width="${major ? 3 : 2}" opacity="${opacity}"/>`;
  }
  [['start', 17, '20250407'], ['middle', 390, '20250523'], ['middle', 786, '20250710'], ['end', 1183, '20250826']].forEach(([anchor, x, t]) => {
    out += `<text class="date" x="${x}" y="309" text-anchor="${anchor}">${t}</text>`;
  });
  document.getElementById('volume').innerHTML = out;
}

drawKline();
drawVolume();
```
